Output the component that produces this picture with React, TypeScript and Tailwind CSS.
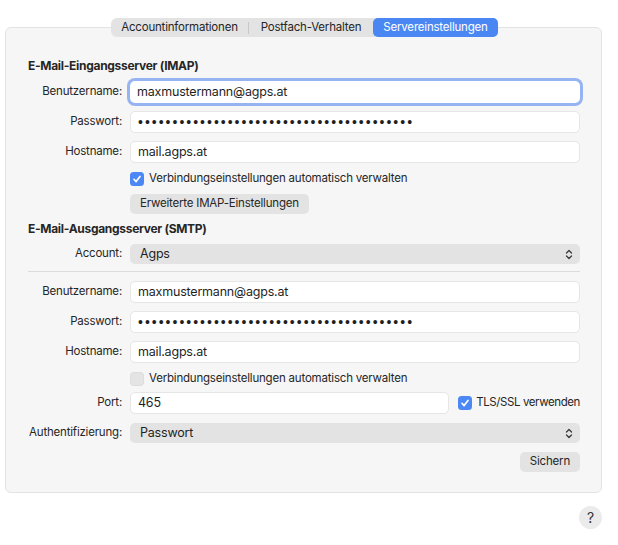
import React from "react";

const font = { fontFamily: "Inter, 'Liberation Sans', sans-serif" };

function Label({ children }: { children: React.ReactNode }) {
  return (
    <div className="w-[94px] shrink-0 whitespace-nowrap text-right text-[11.5px] tracking-[-0.2px] text-[#262626]">
      {children}
    </div>
  );
}

function Field({ value, focused, dots }: { value?: string; focused?: boolean; dots?: boolean }) {
  return (
    <div
      className={
        "flex h-[22px] min-w-0 flex-1 items-center overflow-hidden rounded-[5px] bg-white px-[7px] text-[12.5px] tracking-[-0.2px] text-[#1f1f1f] " +
        (focused ? "ring-[3px] ring-[#97b4f2]" : "border border-[#e6e6e6]")
      }
    >
      {dots ? (
        <span className="whitespace-nowrap text-[14px] leading-none tracking-[2px] text-[#1f1f1f]" style={{ fontFamily: "'Liberation Sans', sans-serif" }}>
          {"•".repeat(40)}
        </span>
      ) : (
        value
      )}
    </div>
  );
}

function Row({ label, children, className }: { label: string; children: React.ReactNode; className?: string }) {
  return (
    <div className={"flex items-center gap-[8px] " + (className ?? "")}>
      <Label>{label}</Label>
      {children}
    </div>
  );
}

function Check({ checked }: { checked?: boolean }) {
  return checked ? (
    <span className="flex h-[14px] w-[14px] shrink-0 items-center justify-center rounded-[3.5px] bg-[#4b88f6]">
      <svg width="10" height="10" viewBox="0 0 10 10" fill="none">
        <path d="M2 5.3 L4.1 7.6 L8 2.4" stroke="white" strokeWidth="1.7" strokeLinecap="round" strokeLinejoin="round" />
      </svg>
    </span>
  ) : (
    <span className="h-[14px] w-[14px] shrink-0 rounded-[3.5px] border border-[#dcdcdc] bg-[#e4e4e4]" />
  );
}

function UpDown() {
  return (
    <svg width="8" height="11" viewBox="0 0 8 11" fill="none">
      <path d="M1.5 4 L4 1.5 L6.5 4" stroke="#3a3a3a" strokeWidth="1.3" strokeLinecap="round" strokeLinejoin="round" />
      <path d="M1.5 7 L4 9.5 L6.5 7" stroke="#3a3a3a" strokeWidth="1.3" strokeLinecap="round" strokeLinejoin="round" />
    </svg>
  );
}

function Select({ value }: { value: string }) {
  return (
    <div className="flex h-[20px] flex-1 items-center justify-between rounded-[5px] bg-[#e3e3e3] pl-[10px] pr-[7px] text-[12.5px] tracking-[-0.2px] text-[#1f1f1f]">
      <span>{value}</span>
      <UpDown />
    </div>
  );
}

function CheckLine({ checked, text }: { checked?: boolean; text: string }) {
  return (
    <div className="ml-[102px] mt-[8px] flex h-[16px] items-center gap-[5px] text-[11.5px] tracking-[-0.2px] text-[#262626]">
      <Check checked={checked} />
      <span>{text}</span>
    </div>
  );
}

function Heading({ children, className }: { children: React.ReactNode; className?: string }) {
  return (
    <div className={"h-[16px] text-[12px] font-bold leading-[16px] tracking-[-0.3px] text-[#262626] " + (className ?? "")}>
      {children}
    </div>
  );
}

export default function App() {
  return (
    <div className="relative h-[545px] w-[618px] bg-white" style={font}>
      <div className="absolute left-[111px] top-[18px] z-10 flex h-[19px] w-[387px] items-center rounded-[6px] bg-[#e3e3e3] text-[11.5px] tracking-[-0.2px] text-[#262626]">
        <div className="flex w-[137px] justify-center">Accountinformationen</div>
        <div className="h-[12px] w-px bg-[#c8c8c8]" />
        <div className="flex w-[124px] justify-center">Postfach-Verhalten</div>
        <div className="flex h-[19px] flex-1 items-center justify-center rounded-[5px] bg-[#4a87f3] text-white">
          Servereinstellungen
        </div>
      </div>

      <div className="pl-[5px] pr-[16px] pt-[27px]">
        <div className="h-[466px] rounded-[6px] border border-[#e3e3e3] bg-[#f6f6f6] pl-[22px] pr-[21px] pt-[30px]">
          <Heading>E-Mail-Eingangsserver (IMAP)</Heading>
          <Row label="Benutzername:" className="mt-[7px]">
            <Field value="maxmustermann@agps.at" focused />
          </Row>
          <Row label="Passwort:" className="mt-[8px]">
            <Field dots />
          </Row>
          <Row label="Hostname:" className="mt-[8px]">
            <Field value="mail.agps.at" />
          </Row>
          <CheckLine checked text="Verbindungseinstellungen automatisch verwalten" />
          <div className="ml-[102px] mt-[7px] flex">
            <div className="flex h-[20px] items-center rounded-[5px] bg-[#e3e3e3] px-[10px] text-[11.5px] tracking-[-0.2px] text-[#262626]">
              Erweiterte IMAP-Einstellungen
            </div>
          </div>
          <Heading className="mt-[7px]">E-Mail-Ausgangsserver (SMTP)</Heading>
          <Row label="Account:" className="mt-[7px]">
            <Select value="Agps" />
          </Row>
          <div className="mt-[7px] h-px bg-[#dcdcdc]" />
          <Row label="Benutzername:" className="mt-[9px]">
            <Field value="maxmustermann@agps.at" />
          </Row>
          <Row label="Passwort:" className="mt-[8px]">
            <Field dots />
          </Row>
          <Row label="Hostname:" className="mt-[8px]">
            <Field value="mail.agps.at" />
          </Row>
          <CheckLine text="Verbindungseinstellungen automatisch verwalten" />
          <Row label="Port:" className="mt-[5px]">
            <div className="flex w-[319px] shrink-0">
              <Field value="465" />
            </div>
            <div className="flex min-w-0 flex-1 items-center justify-end gap-[4px] whitespace-nowrap text-[11.5px] tracking-[-0.4px] text-[#262626]">
              <Check checked />
              <span>TLS/SSL verwenden</span>
            </div>
          </Row>
          <Row label="Authentifizierung:" className="mt-[9px]">
            <Select value="Passwort" />
          </Row>
          <div className="mt-[9px] flex justify-end">
            <div className="flex h-[20px] items-center rounded-[5px] bg-[#e3e3e3] px-[10px] text-[11.5px] tracking-[-0.2px] text-[#262626]">
              Sichern
            </div>
          </div>
        </div>
        <div className="mt-[13px] flex justify-end">
          <div className="flex h-[23px] w-[23px] items-center justify-center rounded-full bg-[#ebebeb] text-[14px] text-[#333]">
            ?
          </div>
        </div>
      </div>
    </div>
  );
}
